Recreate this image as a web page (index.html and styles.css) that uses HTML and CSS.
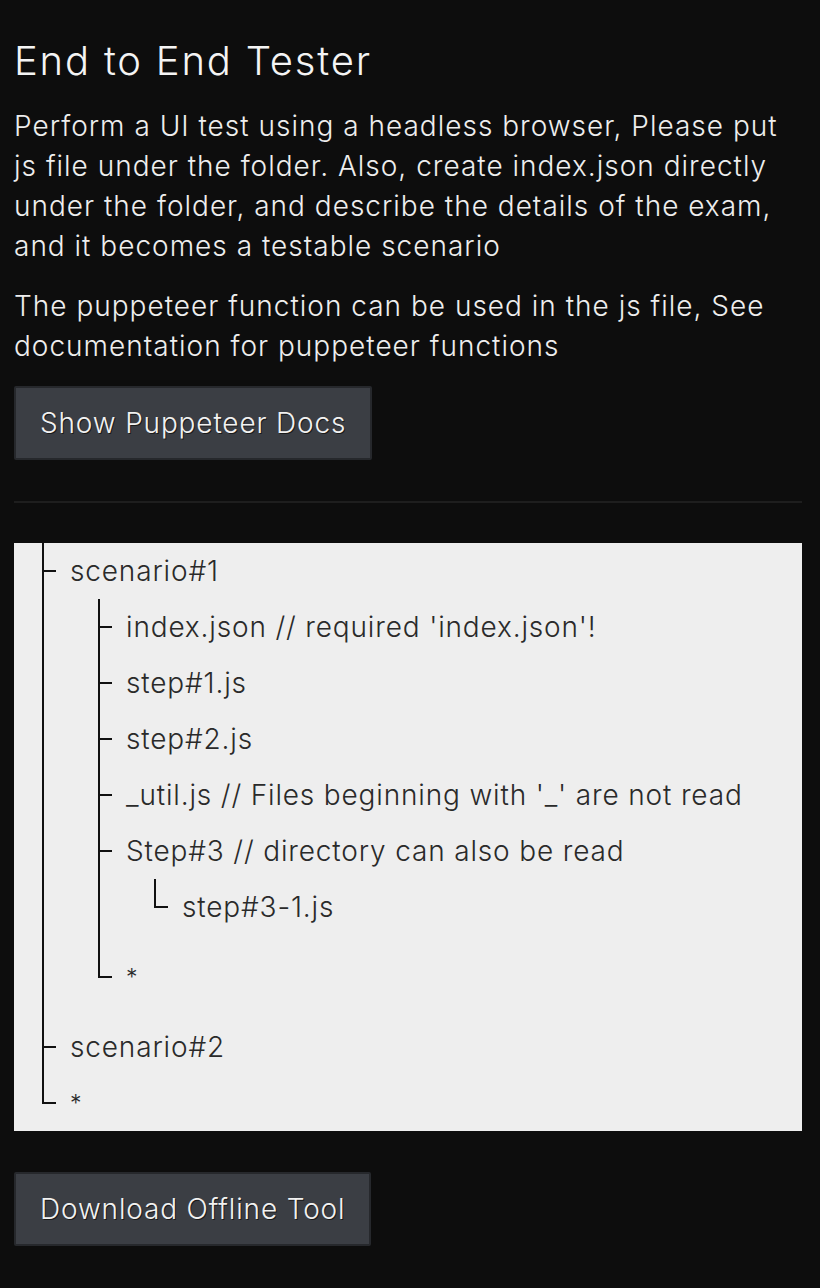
FILE: index.html
```
<!DOCTYPE html>
<html lang="en">
<head>
    <meta charset="UTF-8">
    <meta name="viewport" content="width=device-width, initial-scale=1.0">
    <title>End to End Tester</title>
    <link rel="stylesheet" href="styles.css">
</head>
<body>

    <h1>End to End Tester</h1>

    <p>Perform a UI test using a headless browser, Please put js file under the folder. Also, create index.json directly under the folder, and describe the details of the exam, and it becomes a testable scenario</p>
    <p>The puppeteer function can be used in the js file, See documentation for puppeteer functions</p>

    <button class="btn">Show Puppeteer Docs</button>

    <hr>

    <div class="tree">
        <ul>
            <li>scenario#1
                <ul>
                    <li>index.json // required 'index.json'!</li>
                    <li>step#1.js</li>
                    <li>step#2.js</li>
                    <li>_util.js // Files beginning with '_' are not read</li>
                    <li>Step#3 // directory can also be read
                        <ul>
                            <li>step#3-1.js</li>
                        </ul>
                    </li>
                    <li class="small">*</li>
                </ul>
            </li>
            <li>scenario#2</li>
            <li class="small">*</li>
        </ul>
    </div>

    <button class="btn">Download Offline Tool</button>

</body>
</html>
```

FILE: styles.css
```
body {
    font-family: Inter, "Noto Sans", "Noto Sans CJK JP", sans-serif;
    font-weight: 300;
    margin: 0;
    padding: 0 18px 0 14px;
    background-color: #0d0d0d;
    color: #eeeeee;
}

h1 {
    font-size: 40px;
    font-weight: 300;
    letter-spacing: 0.045em;
    line-height: 56px;
    margin: 33px 0 17px;
    color: #f4f4f4;
}

p {
    font-size: 28px;
    letter-spacing: 1px;
    line-height: 40px;
    margin: 0 0 20px;
}

.btn {
    font-family: inherit;
    font-weight: 300;
    letter-spacing: 0.03em;
    font-size: 28px;
    line-height: 40px;
    padding: 15px 24px;
    margin-top: 1px;
    background-color: #3b3e44;
    color: #f2f2f2;
    border: 2px solid #26282c;
    border-radius: 2px;
    text-shadow: 1px 1px 0 #1a1a1a;
    display: block;
}

hr {
    border: none;
    border-top: 2px solid #1e1e1e;
    margin: 41px 0 40px;
}

.tree {
    background-color: #eeeeee;
    color: #2a2a2a;
    margin-bottom: 41px;
}

.tree ul {
    list-style: none;
    margin: 0 0 0 28px;
    padding: 0;
}

.tree ul ul {
    padding-bottom: 14px;
}

.tree li {
    position: relative;
    padding-left: 28px;
    font-size: 28px;
    letter-spacing: 0.03em;
    line-height: 56px;
}

/* vertical connector */
.tree li::before {
    content: "";
    position: absolute;
    left: 0;
    top: 0;
    bottom: 0;
    border-left: 2px solid #111;
}

.tree li:last-child::before {
    bottom: auto;
    height: 29px;
}

/* horizontal tick */
.tree li::after {
    content: "";
    position: absolute;
    left: 0;
    top: 27px;
    width: 14px;
    border-top: 2px solid #111;
}

.tree li.small {
    font-size: 23px;
}
```
